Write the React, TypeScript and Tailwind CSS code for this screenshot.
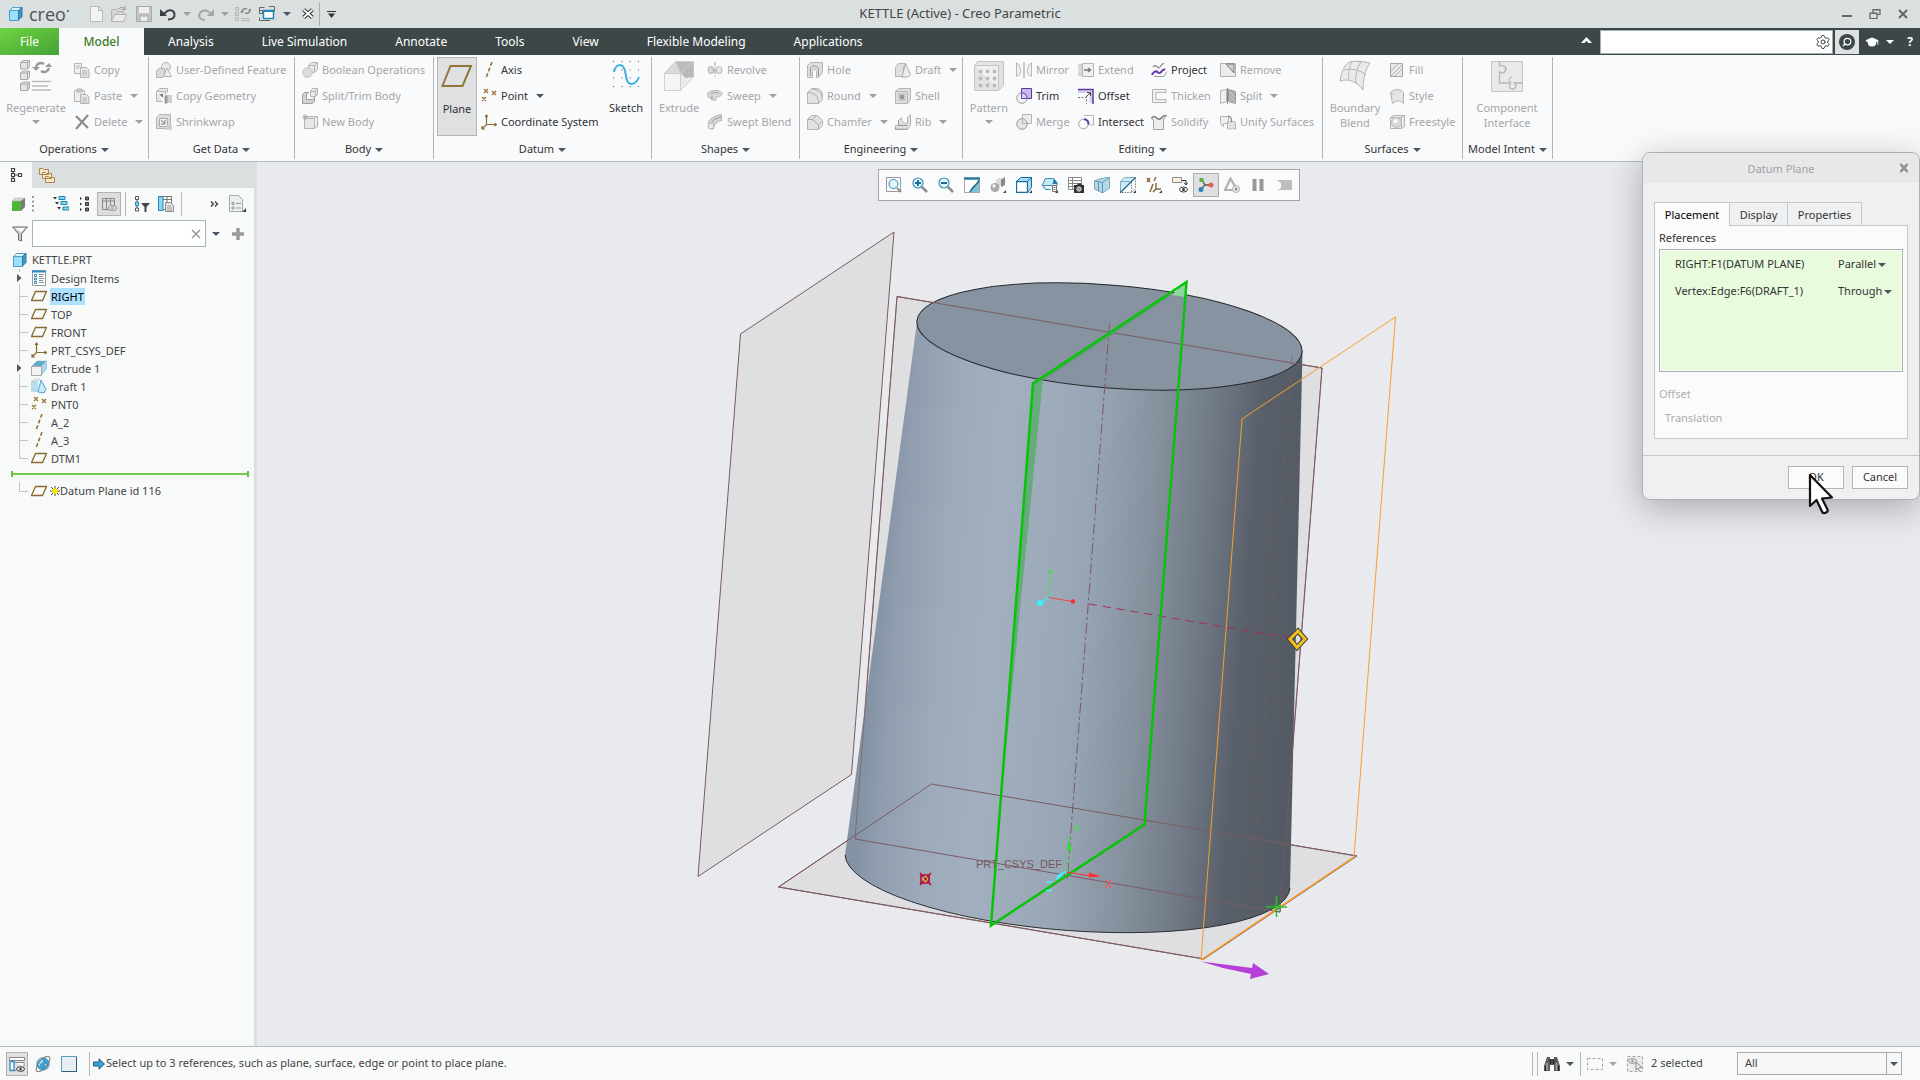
import type { ReactNode } from "react";
import { GraduationCap, Search, Settings } from "lucide-react";

type IconProps = { className?: string; box?: number; children: ReactNode };

const Icon = ({ className = "w-4 h-4", box = 16, children }: IconProps) => (
  <svg viewBox={`0 0 ${box} ${box}`} className={`${className} shrink-0`} fill="none" stroke="#b4b4b4">
    {children}
  </svg>
);

const Caret = ({ className = "text-gray-600" }: { className?: string }) => (
  <svg viewBox="0 0 8 4" className={`h-1 w-2 shrink-0 ${className}`}>
    <path d="M0 0h8L4 4z" fill="currentColor" />
  </svg>
);

/* ---------- shared model icons ---------- */

const BlueCube = () => (
  <Icon>
    <path d="M1.5 4.5h9v10h-9z" fill="#9be0fb" stroke="#4f9cc4" />
    <path d="M1.5 4.5l3-3H14l-3.5 3z" fill="#d6f3fd" stroke="#4f9cc4" />
    <path d="M10.5 4.5L14 1v9.5L10.5 14z" fill="#3f97c4" stroke="#2c7ba6" />
  </Icon>
);
const GreenCube = () => (
  <Icon>
    <path d="M1 5h9v10H1z" fill="#4cb734" stroke="none" />
    <path d="M1 5l3-3h10l-4 3z" fill="#d8d8d8" stroke="#a8a8a8" strokeWidth=".5" />
    <path d="M10 5l4-3v9l-4 4z" fill="#7b7b7b" stroke="none" />
  </Icon>
);
const PlaneIcon = () => (
  <Icon><path d="M4.5 3.5h11l-4 9h-11z" stroke="#8a6b33" strokeWidth="1.3" /></Icon>
);
const AxisIcon = () => (
  <Icon><path d="M11 0L5 16" stroke="#9a7634" strokeWidth="1.6" strokeDasharray="4 2" /></Icon>
);
const PointIcon = () => (
  <Icon><path d="M3 1l4 4m0-4L3 5M11 3l4 4m0-4l-4 4M1 9l4 4m0-4l-4 4" stroke="#9a7634" strokeWidth="1.4" /></Icon>
);
const CsysIcon = () => (
  <Icon>
    <path d="M5.500 1v9.500H15M5.500 10.500L1 15M4 3l1.500-2L7 3M13.500 9l2 1.500-2 1.500M1 12v3h3" stroke="#8a6b33" strokeWidth="1.200" />
  </Icon>
);
const ExtrudeIcon = () => (
  <Icon>
    <path d="M1 6l5-5h9.500l-5 5z" fill="#5ea9cc" stroke="#7fb7d2" strokeWidth=".5" />
    <path d="M10.500 6l5-5v8l-5 6z" fill="#a9d8ee" stroke="#7fb7d2" strokeWidth=".5" />
    <path d="M.5 6.500h10v9H.5z" fill="#f2f2f2" stroke="#a9a9a9" />
  </Icon>
);
const DraftTreeIcon = () => (
  <Icon>
    <path d="M0 3h7v11H0z" fill="#b9dced" stroke="none" />
    <path d="M1 3l3-2h5l-2 2z" fill="#ececec" stroke="#bbb" strokeWidth=".5" />
    <path d="M7 14L10 2l5 9-2 4z" fill="#c7e9f8" stroke="#4ea5cf" />
  </Icon>
);
const DesignItemsIcon = () => (
  <Icon>
    <path d="M1.500.5h13v15h-13z" fill="#fff" stroke="#9a9a9a" />
    <path d="M1 1.500h14" stroke="#2c8fbf" strokeWidth="2" />
    <path d="M3.500 4.500h2v2h-2zM3.500 8h2v2h-2zM3.500 11.500h2v2h-2z" stroke="#2c8fbf" />
    <path d="M8 4.500h5M8 6.500h4M8 8.500h5M8 10.500h4M8 12.500h5" stroke="#8a8a8a" />
  </Icon>
);

/* ---------- ribbon icons, small ---------- */

const small: Record<string, ReactNode> = {
  Copy: <><path d="M.5 1.500h7v10h-7z" fill="#f1f1f1" /><path d="M6.500 5.500h6l2.500 2.500v7.500h-8.500z" fill="#e6e6e6" /><path d="M2 4h4M2 6h3M8 9h5M8 11h5M8 13h5" /></>,
  Paste: <><path d="M.5 2.500h10v11H.5z" fill="#eee" /><path d="M3 1h5v3H3z" fill="#ccc" /><path d="M6.500 6.500h6l2.500 2.500v6.500h-8.500z" fill="#e6e6e6" /><path d="M8 10h5M8 12h5M8 14h5" /></>,
  Delete: <path d="M2 2l12 12M14 1L2 15" stroke="#8c8c8c" strokeWidth="2.200" />,
  "User-Defined Feature": <><circle cx="10" cy="5" r="4.500" fill="#e8e8e8" /><path d="M.5 8.500l2-2h6v7l-2 2h-6z" fill="#d9d9d9" /><path d="M11 6l4.500 8.500h-8z" fill="#ededed" /></>,
  "Copy Geometry": <><path d="M.5 3.500l3-3h8v4M.5 3.500h9v3M.5 3.500v10h6" fill="#e4e4e4" /><path d="M3 6h4v4z" fill="#777" stroke="none" /><path d="M9 7h7v8H9z" fill="#d0d0d0" stroke="none" /><path d="M8.500 7.500h3v8h-3z" fill="#9a9a9a" stroke="none" /></>,
  Shrinkwrap: <><path d="M.5 3.500l3-3h11v10l-3 4H.5z" fill="#dcdcdc" /><path d="M3.500 4.500h8v8h-8z" fill="#f2f2f2" stroke="#aaa" /><path d="M5 6l3 3M9 6v4H5" stroke="#777" /><path d="M10 11h6v5h-6z" fill="#d0d0d0" stroke="none" /></>,
  "Boolean Operations": <><path d="M6.500 3.500l3-3h6v7l-3 3h-6z" fill="#e9e9e9" /><path d="M6.500 3.500h6v7M12.500 3.500l3-3" /><circle cx="5.500" cy="10.500" r="4.800" fill="#dcdcdc" stroke="#c4c4c4" /></>,
  "Split/Trim Body": <><path d="M8.500 3.500l2-3h5v6l-2 2h-5z" fill="#ececec" /><path d="M8.500 3.500h5v5M13.500 3.500l2-3" /><path d="M.5 6.500l2-2h4l-2 2v5h6l2-2v4l-2.500 2H.5z" fill="#d2d2d2" stroke="#9c9c9c" /></>,
  "New Body": <><path d="M2.500 4.500h10v10h-10zM2.500 4.500l2-2h11l-3 2M12.500 14.500l3-2v-10" fill="#e8e8e8" /><path d="M3 0v6M0 3h6M1 1l4 4M5 1L1 5" stroke="#a5a5a5" strokeWidth=".8" /></>,
  Revolve: <><ellipse cx="4" cy="8" rx="3" ry="3.500" fill="#d8d8d8" /><ellipse cx="12" cy="8" rx="3" ry="3.500" fill="#e8e8e8" /><path d="M8 0v16" strokeDasharray="4 1.500 1 1.500" stroke="#999" /><path d="M5 8h5" /></>,
  Sweep: <><path d="M1 5c4-4 14-3 14 1 0 2-4 3-6 3v3c-2 1-4 0-4-1l-4-2z" fill="#dadada" /><path d="M4 6c3-2 7-2 8 0M5 8v4" stroke="#999" /></>,
  "Swept Blend": <><path d="M1.500 9.500C2 4 8 2 14.500.5v6C10 7 7 10 6.500 15l-5-1z" fill="#d6d6d6" /><circle cx="4" cy="12" r="3" fill="#ececec" /><path d="M5 8c2-3 5-4 9-5" stroke="#9a9a9a" /></>,
  Hole: <><path d="M.5 3.500l3-3h12v10l-4 5h-2v-6c0-3-4-3-4 0v6h-5z" fill="#dedede" /><path d="M3.500 14V7c0-4 7-4 8 0v7" stroke="#999" /></>,
  Round: <><path d="M.5 4.500l4-4h5c3 0 6 3 6 6v5l-4 4H.5z" fill="#e2e2e2" /><path d="M.5 4.500c7 0 11 3 11 11M5 1c6 0 10 4 10 8" stroke="#aaa" /></>,
  Chamfer: <><path d="M.5 5.500l4-4h6l5 5v5l-4 4H.5z" fill="#e2e2e2" /><path d="M.5 5.500h5l6 5.500v4.500M5.500 5.500l4-4M11.500 11l4-4" stroke="#aaa" /></>,
  Draft: <><path d="M.5 5.500l3-4h7l-2 4v9h-8z" fill="#e0e0e0" /><path d="M10.500 1.500l5 11-2.500 2.500h-6z" fill="#eee" stroke="#aaa" /></>,
  Shell: <><path d="M.5 3.500l3-3h12v11l-3 4H.5z" fill="#e0e0e0" /><path d="M.5 3.500h12v12" /><path d="M4 6h6v6H4z" fill="#999" stroke="#c9c9c9" strokeWidth="2" /></>,
  Rib: <><path d="M.5 15.500h12l3-4v-11l-3 3v6c-4 0-6-2-6-6l-3 3v5h-3z" fill="#e0e0e0" /><path d="M3.500 6.500v5h9" stroke="#999" /><path d="M0 15h12" strokeDasharray="1.500 1" stroke="#888" /></>,
  Mirror: <><path d="M1 1c4 4 5 10 1 13H.5V1zM15 1c-4 4-5 10-1 13h1.500V1z" fill="#f2f2f2" /><path d="M8 0v16" stroke="#999" /></>,
  Trim: <><path d="M5.500.5h10v10h-10z" fill="#c9b8f2" stroke="#5a3b9c" /><circle cx="6" cy="10" r="5.300" fill="#f3f3f3" stroke="#9c9c9c" /><path d="M5.500 4.700v5.800h5.500c0-3-2-5.500-5.500-5.800z" fill="#ddd2f5" stroke="#6a4aa8" /></>,
  Merge: <><path d="M6.500.5h9v9h-9z" fill="#ededed" /><circle cx="6" cy="10" r="5.300" fill="#e4e4e4" stroke="#9c9c9c" /><path d="M6.500 5v4.500H11" stroke="#b5b5b5" /></>,
  Extend: <><path d="M0 2.500h4v11H0" fill="#ddd" stroke="#ccc" /><path d="M4.500 1.500h11v13h-11z" fill="#f0f0f0" /><path d="M6 8h6M10 6l2.500 2-2.500 2" stroke="#777" strokeWidth="1.400" /></>,
  Offset: <><path d="M0 3.500h13V15" stroke="#d9cdf3" strokeWidth="3" /><path d="M0 1.500h15V16" stroke="#5a3b9c" strokeWidth="1.500" /><path d="M0 9.500h8.500V16" stroke="#777" strokeDasharray="2 1.500" /><path d="M8 9l4-4M9 4.500h3.500V8" stroke="#444" /></>,
  Intersect: <><path d="M6 1.500h9.500v9.500H12" stroke="#b5b5b5" /><circle cx="5.500" cy="10" r="4.800" stroke="#a5a5a5" /><path d="M6 5.200c3 0 5 2.500 4.500 5.500" stroke="#5a3b9c" strokeWidth="2" /></>,
  Project: <><path d="M2 5c3-4 5 3 7 0s3-4 4-3" stroke="#8c8c8c" strokeWidth="1.300" /><path d="M3 14.500h10l3-5" stroke="#9a9a9a" /><path d="M.5 12.500c2-1 3-4 5-3s3 3 5 0 3-1 3-3" stroke="#6432a8" strokeWidth="2" /></>,
  Thicken: <path d="M15 1.500H1.500v13H15v-3H5v-7h10z" fill="#f0f0f0" />,
  Solidify: <><path d="M.5 4.500C4-1 6 7 9 5s3-4 6.500-3.500L12.500 5v10.500h-10V6z" fill="#ededed" stroke="#a0a0a0" /><path d="M.5 4.500C4-1 6 7 9 5s3-4 6.500-3.500" stroke="#888" strokeWidth="1.600" /></>,
  Remove: <><path d="M.5 1.500h15v13H.5z" fill="#ececec" /><path d="M6 2l8 9V2z" fill="#d0d0d0" stroke="#777" /></>,
  Split: <><path d="M.5 2.500l6-1v12l-6 2z" fill="#f0f0f0" /><path d="M8.500 1.500l7 2v12l-7-2z" fill="#bdbdbd" stroke="#999" /><path d="M8.500 5l7 7M8.500 9l5 5M11 3l4 4" stroke="#999" /><path d="M7.500 0v16" stroke="#888" /></>,
  "Unify Surfaces": <><path d="M.5 2.500h8v7h-5v3c-2 0-3-3-3-5z" fill="#f0f0f0" /><path d="M7.500 7.500c2 2 4-2 8 1v7c-3-3-5 1-8-1z" fill="#e3e3e3" /><path d="M8 2c4 1 4 4 3 6" stroke="#888" strokeWidth="1.300" /></>,
  Fill: <><path d="M1.500 1.500h12v13h-12z" fill="#e8e8e8" stroke="#a5a5a5" /><path d="M2 9l7-7M2 14L13 3M6 14l7-7" /></>,
  Style: <><path d="M1.500 4.500c4-4 10-4 13 0v11c-4-4-7-3-11 0z" fill="#e4e4e4" /><path d="M1.500 4.500l3 2" /></>,
  Freestyle: <><path d="M1.500 3.500h11v11h-11zM1.500 3.500l3-2h11v11l-3 2M12.500 3.500l3-2" fill="#eee" /><circle cx="7.500" cy="8.500" r="5" fill="#d9d9d9" stroke="#bbb" /><circle cx="6.500" cy="7" r="2" fill="#fff" stroke="none" /></>,
};

const smallIcon = (name: string) => {
  if (name === "Axis") return <AxisIcon />;
  if (name === "Point") return <PointIcon />;
  if (name === "Coordinate System") return <CsysIcon />;
  return <Icon>{small[name]}</Icon>;
};

/* ---------- ribbon icons, large ---------- */

const miniCube = (x: number, y: number) => (
  <path
    key={y}
    d={`M${x} ${y + 2}l2-2h7v6l-2 2.500h-7zM${x} ${y + 2}h7v6.500M${x + 7} ${y + 2}l2-2`}
    fill="#e4e4e4"
    stroke="#a8a8a8"
  />
);

const large: Record<string, ReactNode> = {
  Regenerate: <>
    {[0.5, 11, 22].map((y) => miniCube(0.5, y))}
    <path d="M16 7c1-4 5-5 8-3M29 8c-1 4-5 5-8 3" stroke="#9a9a9a" strokeWidth="2.500" />
    <path d="M12 7h8l-4 4zM25 7h7l-3-4z" fill="#9a9a9a" stroke="none" />
    <path d="M12 21.500h19M12 26h16M12 30h19" stroke="#bdbdbd" strokeWidth="1.500" />
  </>,
  Plane: <path d="M9.500 5h20.500l-8.500 20H1.500z" stroke="#94753a" strokeWidth="2" />,
  Sketch: <>
    {[1.5, 10, 18, 26.5].map((y) => <path key={y} d={`M3 ${y}h26`} stroke="#555" strokeDasharray="1 7.300" />)}
    <path d="M4 12C6 3 13 3 15 11c1.500 6 1 12 6 13 4 0 6-2 8-7" stroke="#3fb0e0" strokeWidth="2" />
  </>,
  Extrude: <>
    <path d="M1.500 13.500l11-12h18l-13 12z" fill="#bcbcbc" stroke="#cfcfcf" />
    <path d="M12.500 1.500l5 12h-16z" fill="#dadada" stroke="#cfcfcf" />
    <path d="M17.500 13.500l13-12V17l-13 13.500z" fill="#ececec" stroke="#cfcfcf" />
    <path d="M30.500 1.500V17l-8 1-4.500-4.500z" fill="#b9b9b9" stroke="none" />
    <path d="M1.500 13.500h16v17h-16z" fill="#f4f4f4" stroke="#cfcfcf" />
  </>,
  Pattern: <>
    <path d="M1.500 5.500l3-4h26v24l-5 5h-24z" fill="#e2e2e2" stroke="#c4c4c4" />
    <path d="M1.500 5.500h24v25" fill="#f0f0f0" stroke="#c4c4c4" />
    {[10, 17, 24].flatMap((y) => [6, 13, 20].map((x) => <path key={`${x}-${y}`} d={`M${x} ${y}h3v3h-3z`} fill="#a5a5a5" stroke="#d0d0d0" />))}
  </>,
  "Boundary Blend": <>
    <path d="M1 21C3 9 7 2 13 1.500c6-.5 12 0 18 1.500-4 5-7 14-7 27C18 22 10 18 1 21z" fill="#eaeaea" stroke="#b4b4b4" />
    <path d="M13 1.500C10 7 9 14 10 19.500M22 1.500C18 8 16 16 17 23M5 10c7-2 17 0 22 5" stroke="#b4b4b4" />
  </>,
  "Component Interface": <>
    <path d="M.5 1.500h31v30H.5z" fill="#e9e9e9" stroke="#c4c4c4" />
    <path d="M8.500 2v4c3-1 7 0 6 4s-5 3-6 2v11h11c-2 3-1 6 2 6s5-3 2-6h8" stroke="#b4b4b4" strokeWidth="1.300" />
    <path d="M14 9h2M20 16v2c-3 0-3 4 0 4" stroke="#b4b4b4" />
  </>,
};

/* ---------- ribbon ---------- */

const enabled = ["Plane", "Axis", "Point", "Coordinate System", "Sketch", "Project", "Trim", "Offset", "Intersect"];
const withMenu = ["Regenerate", "Paste", "Delete", "Point", "Sweep", "Round", "Chamfer", "Draft", "Rib", "Pattern", "Split"];
const tone = (name: string) => (enabled.includes(name) ? "text-[#333]" : "text-[#a6a6a6]");
const caretTone = (name: string) => (enabled.includes(name) ? "text-gray-600" : "text-[#a0a0a0]");

type Part = { big: string; className: string } | { items: string[]; className: string };
type Group = { title: string; className: string; parts: Part[] };

const groups: Group[] = [
  { title: "Operations", className: "w-[149px]", parts: [
    { big: "Regenerate", className: "w-[72px]" },
    { items: ["Copy", "Paste", "Delete"], className: "pl-0.5" },
  ] },
  { title: "Get Data", className: "w-[146px]", parts: [
    { items: ["User-Defined Feature", "Copy Geometry", "Shrinkwrap"], className: "pl-[7px]" },
  ] },
  { title: "Body", className: "w-[139px]", parts: [
    { items: ["Boolean Operations", "Split/Trim Body", "New Body"], className: "pl-[7px]" },
  ] },
  { title: "Datum", className: "w-[218px]", parts: [
    { big: "Plane", className: "ml-[3px] w-10 border border-[#b4b4b4] bg-[#dfe0e2]" },
    { items: ["Axis", "Point", "Coordinate System"], className: "w-[126px] pl-1" },
    { big: "Sketch", className: "w-[46px]" },
  ] },
  { title: "Shapes", className: "w-[148px]", parts: [
    { big: "Extrude", className: "w-[54px]" },
    { items: ["Revolve", "Sweep", "Swept Blend"], className: "pl-px" },
  ] },
  { title: "Engineering", className: "w-[163px]", parts: [
    { items: ["Hole", "Round", "Chamfer"], className: "w-[95px] pl-[7px]" },
    { items: ["Draft", "Shell", "Rib"], className: "" },
  ] },
  { title: "Editing", className: "w-[360px]", parts: [
    { big: "Pattern", className: "w-[52px]" },
    { items: ["Mirror", "Trim", "Merge"], className: "w-[63px] pl-px" },
    { items: ["Extend", "Offset", "Intersect"], className: "w-[73px]" },
    { items: ["Project", "Thicken", "Solidify"], className: "w-[69px]" },
    { items: ["Remove", "Split", "Unify Surfaces"], className: "" },
  ] },
  { title: "Surfaces", className: "w-[140px]", parts: [
    { big: "Boundary Blend", className: "w-16" },
    { items: ["Fill", "Style", "Freestyle"], className: "pl-0.5" },
  ] },
  { title: "Model Intent", className: "w-[90px]", parts: [
    { big: "Component Interface", className: "w-[88px]" },
  ] },
];

const BigButton = ({ name, className }: { name: string; className: string }) => (
  <button className={`flex h-[79px] shrink-0 flex-col items-center pt-[3px] ${className} ${tone(name)}`}>
    <Icon className="h-8 w-8" box={32}>{large[name]}</Icon>
    <span className="mt-2 flex flex-col items-center leading-[15px]">
      {name.split(" ").map((word) => <span key={word}>{word}</span>)}
    </span>
    {withMenu.includes(name) && <span className="flex h-3.5 items-center"><Caret className={caretTone(name)} /></span>}
  </button>
);

const SmallButton = ({ name }: { name: string }) => (
  <button className={`flex h-[26px] items-center gap-1 ${tone(name)}`}>
    {smallIcon(name)}
    <span>{name}</span>
    {withMenu.includes(name) && <span className="pl-1"><Caret className={caretTone(name)} /></span>}
  </button>
);

const Ribbon = () => (
  <div className="flex border-b border-[#aebcbf] bg-[#f9fafc] py-0.5 whitespace-nowrap">
    {groups.map((g) => (
      <section key={g.title} className={`flex shrink-0 flex-col border-r border-[#b0b4b6] ${g.className}`}>
        <div className="flex h-[79px]">
          {g.parts.map((p) =>
            "big" in p ? (
              <BigButton key={p.big} name={p.big} className={p.className} />
            ) : (
              <div key={p.items[0]} className={`flex shrink-0 flex-col ${p.className}`}>
                {p.items.map((n) => <SmallButton key={n} name={n} />)}
              </div>
            )
          )}
        </div>
        <button className="flex h-[23px] items-center justify-center gap-1 pt-1 text-[#333]">
          {g.title} <Caret />
        </button>
      </section>
    ))}
  </div>
);

/* ---------- title bar and tabs ---------- */

const TitleBar = () => (
  <header className="grid h-7 grid-cols-[1fr_auto_1fr] items-center bg-[#dadfdf]">
    <div className="flex items-center pl-2">
      <BlueCube />
      <span className="ml-[5px] flex w-[55px] font-['Open_Sans',sans-serif] text-[18px] leading-6 font-medium text-[#4c5557]">
        creo<span className="mt-2 ml-px h-0.5 w-0.5 rounded-full bg-[#4c5557]" />
      </span>
      <button aria-label="New" className="ml-1"><Icon><path d="M2.500.5h8l4 4v11h-12z" fill="#f3f3f3" stroke="#bbb" /><path d="M10.500.5v4h4" /></Icon></button>
      <button aria-label="Open" className="ml-[7px]"><Icon><path d="M.5 15V3.500h5l1 2h6V9" fill="#d5d5d5" /><path d="M.5 15.500l3-7h12l-3 7z" fill="#ececec" /><path d="M7 3c3-2 5-2 7 0M14 0v3.500h-3.500" stroke="#999" /></Icon></button>
      <button aria-label="Save" className="ml-[9px]"><Icon><path d="M.5.5h15v15H.5z" fill="#c4c4c4" stroke="#a9a9a9" /><path d="M3 1h10v6H3z" fill="#f0f0f0" stroke="none" /><path d="M4 10h8v5.500H4z" fill="#eee" stroke="#aaa" /></Icon></button>
      <button aria-label="Undo" className="ml-2"><Icon><path d="M2 6c3 3 2 2 4 0 3-3 8-2 8.500 2S12 13.500 8 13.500" stroke="#3b3f41" strokeWidth="2" /><path d="M0 3v7h7z" fill="#3b3f41" stroke="none" /></Icon></button>
      <span className="ml-[7px]"><Caret className="text-[#a0a0a0]" /></span>
      <button aria-label="Redo" className="ml-[7px]"><Icon><path d="M12 7c-3-4-9-3-10.500 1S4 14 7 14" stroke="#a5a5a5" strokeWidth="2" /><path d="M16 3v7H9z" fill="#a5a5a5" stroke="none" /></Icon></button>
      <span className="ml-[7px]"><Caret className="text-[#a0a0a0]" /></span>
      <button aria-label="Regenerate" className="ml-1.5"><Icon><path d="M.5 1.500h3v3h-3zM.5 6.500h3v3h-3zM.5 11.500h3v3h-3z" /><path d="M6 12.500h9M6 14.500h9" /><path d="M7 6c0-3 3-4 5-3M15 4c0 3-3 4-5 3" stroke="#888" strokeWidth="1.500" /><path d="M5 5h4L7 7.500zM13 5h4l-2-2.500z" fill="#888" stroke="none" /></Icon></button>
      <button aria-label="Windows" className="ml-2"><Icon><path d="M.5 4.500v-3h5M.5 11.500v3h5M10 .5h5.500v5M.5 4.500h3v3h-3zM11 14.500h-6" stroke="#666" /><path d="M4.500 4.500h10v8h-10z" fill="#fff" stroke="#2186b4" strokeWidth="1.500" /><path d="M4 5h11" stroke="#2186b4" strokeWidth="2" /></Icon></button>
      <span className="ml-2"><Caret /></span>
      <button aria-label="Close window" className="ml-[10px]"><Icon className="h-3.5 w-3.5"><path d="M3 3l10 9M13 3L3 12" stroke="#333" strokeWidth="4.500" /><path d="M3 3l10 9M13 3L3 12" stroke="#fff" strokeWidth="2" /></Icon></button>
      <span className="ml-1 h-6 border-l border-[#a9b0b0]" />
      <button aria-label="Customize" className="ml-[7px]"><svg viewBox="0 0 9 7" className="h-[7px] w-[9px]"><path d="M0 0h9v1H0zM1 2.500h7L4.500 7z" fill="#333" /></svg></button>
    </div>
    <h1 className="text-[13px] text-[#444]">KETTLE (Active) - Creo Parametric</h1>
    <div className="flex items-center justify-end gap-4 pr-[11px]">
      <button aria-label="Minimize"><Icon className="h-3 w-3" box={12}><path d="M1 8h10" stroke="#666" strokeWidth="2" /></Icon></button>
      <button aria-label="Restore"><Icon className="h-3 w-3" box={12}><path d="M1 5h7v5.500H1zM4 5V1.500h7v5H8M4 2h7M1 5.500h7" stroke="#666" strokeWidth="1.200" /></Icon></button>
      <button aria-label="Close"><Icon className="h-3 w-3" box={12}><path d="M2 2l8 8M10 2l-8 8" stroke="#666" strokeWidth="2" /></Icon></button>
    </div>
  </header>
);

const tabs = ["Analysis", "Live Simulation", "Annotate", "Tools", "View", "Flexible Modeling", "Applications"];

const TabBar = () => (
  <nav className="flex h-[27px] items-center bg-[#3d4748] text-[12px] text-white">
    <button className="h-full w-[59px] bg-linear-to-br from-[#6ed53f] to-[#46a138] pt-px">File</button>
    <button className="h-full w-[85px] bg-[#f9fafc] pt-px font-medium text-[#3a7a26]">Model</button>
    {tabs.map((t) => <button key={t} className="h-full px-6 pt-px">{t}</button>)}
    <div className="ml-auto flex h-full items-center pr-1.5">
      <button aria-label="Minimize the ribbon" className="mr-2 pb-1"><svg viewBox="0 0 11 6" className="h-1.5 w-[11px]"><path d="M0 6L5.500 0 11 6H7.500l-2-2-2 2z" fill="#fff" /></svg></button>
      <div className="flex h-6 w-[233px] items-center border border-[#9fb0b3] bg-white">
        <input aria-label="Search commands" className="h-full min-w-0 flex-1 px-2 text-[#333] outline-none" />
        <Settings className="mr-px h-4 w-4 text-[#444]" strokeWidth={1.5} />
      </div>
      <button aria-label="Search" className="ml-0.5 flex h-6 w-6 items-center justify-center bg-[#dfe0e3]">
        <span className="flex h-4 w-4 items-center justify-center rounded-full bg-[#3d4748]"><Search className="h-2.5 w-2.5 -scale-x-100" strokeWidth={3} /></span>
      </button>
      <button aria-label="Learning" className="ml-1.5"><GraduationCap className="h-3.5 w-3.5" fill="white" strokeWidth={1.5} /></button>
      <span className="ml-[7px]"><Caret className="text-white" /></span>
      <button aria-label="Help" className="ml-3 w-2 font-bold">?</button>
    </div>
  </nav>
);

/* ---------- model tree ---------- */

type Row = { label: string; icon: ReactNode; expandable?: boolean; selected?: boolean };

const rows: Row[] = [
  { label: "Design Items", icon: <DesignItemsIcon />, expandable: true },
  { label: "RIGHT", icon: <PlaneIcon />, selected: true },
  { label: "TOP", icon: <PlaneIcon /> },
  { label: "FRONT", icon: <PlaneIcon /> },
  { label: "PRT_CSYS_DEF", icon: <CsysIcon /> },
  { label: "Extrude 1", icon: <ExtrudeIcon />, expandable: true },
  { label: "Draft 1", icon: <DraftTreeIcon /> },
  { label: "PNT0", icon: <PointIcon /> },
  { label: "A_2", icon: <AxisIcon /> },
  { label: "A_3", icon: <AxisIcon /> },
  { label: "DTM1", icon: <PlaneIcon /> },
];

const Branch = ({ expandable, last }: { expandable?: boolean; last?: boolean }) => (
  <svg viewBox="0 0 31 18" className="h-[18px] w-[31px] shrink-0" fill="none">
    {expandable ? (
      <>
        <path d="M19.500 0v3M19.500 15v3" stroke="#c2c4c4" />
        <path d="M17 5l4.500 4-4.500 4z" fill="#555" />
      </>
    ) : (
      <path d={last ? "M19.500 0v9.500H28" : "M19.500 0v18M19.500 9.500H28"} stroke="#c2c4c4" />
    )}
  </svg>
);

const Sep = () => <span className="h-6 border-l border-[#b4b8b8]" />;

const Sidebar = () => (
  <aside className="flex w-[257px] shrink-0 flex-col border-r-[3px] border-[#dadfdf] bg-[#f8faf9] text-[#444]">
    <div className="flex h-[26px] bg-[#dadfdf]">
      <button aria-label="Model Tree" className="flex w-8 items-center justify-center bg-[#f8faf9]">
        <Icon><path d="M3.500 1.500h3v3h-3zM3.500 6.500h3v3h-3zM3.500 11.500h3v3h-3zM10.500 6.500h3v3h-3z M5 4.500v2M5 9.500v2M6.500 8h4" stroke="#444" strokeWidth="1.200" /></Icon>
      </button>
      <button aria-label="Folder Browser" className="ml-[7px]">
        <Icon><path d="M.5 1.500h3l1 1h5v5h-9zM3.500 5.500h3l1 1h5v5h-9zM6.500 9.500h3l1 1h5v5h-9z" fill="#f7e7c4" stroke="#a8894d" /></Icon>
      </button>
    </div>
    <div className="flex h-8 items-center pl-[11px]">
      <GreenCube />
      <svg viewBox="0 0 2 16" className="ml-[5px] h-4 w-0.5"><path d="M1 0v16" stroke="#999" strokeWidth="2" strokeDasharray="2 2.500" /></svg>
      <button aria-label="Expand all" className="ml-[19px]"><Icon><path d="M0 1h4L2 3.500zM2 6h4L4 8.500zM4 11h4l-2 2.500z" fill="#333" stroke="none" /><path d="M6 .5h6v3H6zM8 5.500h6v3H8zM10 11h6v3h-6z" fill="#8fd4ef" stroke="#2186b4" /></Icon></button>
      <button aria-label="Collapse all" className="ml-2"><Icon><path d="M3 1l2 1.500L3 4zM3 6.500L5 8 3 9.500zM3 12l2 1.500L3 15z" fill="#333" stroke="none" /><path d="M8.500 1h3v3h-3zM8.500 6.500h3v3h-3zM8.500 12h3v3h-3z" fill="#777" stroke="#333" /></Icon></button>
      <button aria-label="Tree columns" className="ml-1 flex h-6 w-6 items-center justify-center border border-[#b4b4b4] bg-[#dcdddf]">
        <Icon><path d="M1.500 2.500h12v11h-12zM1.500 5h12M5.500 2.500v11M9.500 2.500v7" stroke="#8a8a8a" /><ellipse cx="11.500" cy="12" rx="4" ry="2.500" fill="#eee" stroke="#8a8a8a" /><circle cx="11.500" cy="12" r="1" stroke="#8a8a8a" /></Icon>
      </button>
      <span className="ml-1 flex"><Sep /></span>
      <button aria-label="Tree filters" className="ml-2"><Icon><path d="M1.500.5h3v3h-3zM1.500 12h3v3h-3zM3 3.500v8.500" stroke="#555" /><path d="M1.500 6h3v3.500h-3z" fill="#8fd4ef" stroke="#2186b4" /><path d="M7 7h9l-3.500 4v5h-2v-5z" fill="#444" stroke="none" /></Icon></button>
      <button aria-label="Tree settings" className="ml-2"><Icon><path d="M.5.5h13v13H.5zM.5 3.500h13M9 .5v8" fill="#fff" stroke="#777" /><path d="M.5.5h4.500v14H.5z" fill="#8fd4ef" stroke="#2186b4" /><path d="M7.500 6.500h5l3 3v6h-8z" fill="#e9e9e9" stroke="#888" /><path d="M9 10h4M9 12h5M9 14h5" stroke="#999" /></Icon></button>
      <span className="ml-[7px] flex"><Sep /></span>
      <button aria-label="More" className="ml-7"><svg viewBox="0 0 9 6" className="h-1.5 w-[9px]"><path d="M1 .5L3.500 3 1 5.500M5 .5L7.500 3 5 5.500" fill="none" stroke="#333" strokeWidth="1.200" /></svg></button>
      <button aria-label="Settings" className="ml-[10px]"><Icon className="h-[18px] w-[18px]" box={18}><path d="M.5.5h9l4 4v12H.5z" fill="#eceff1" stroke="#a5a9ab" /><path d="M3 7.500h2v2H3zM3 12h2v2H3zM7 8.500h5M7 13h5" stroke="#999" /><path d="M17 13v4h-4z" fill="#444" stroke="none" /></Icon></button>
    </div>
    <div className="flex h-[27px] items-center pl-3">
      <Icon><path d="M.5 1h15l-6 7v7l-3-1V8z" fill="#c9cbcc" stroke="#6c6f70" /><path d="M3 2h10L9 6z" fill="#fff" stroke="none" /></Icon>
      <div className="ml-1 flex h-full w-[174px] items-center border border-[#a9b6b8] bg-white">
        <input aria-label="Filter tree" className="h-full min-w-0 flex-1 px-1 outline-none" />
        <button aria-label="Clear filter" className="mr-1"><Icon className="h-2.5 w-2.5" box={10}><path d="M1 1l8 8M9 1L1 9" stroke="#999" strokeWidth="1.500" /></Icon></button>
      </div>
      <span className="ml-1.5"><Caret /></span>
      <button aria-label="Add" className="ml-3"><Icon className="h-3 w-3" box={12}><path d="M6 0v12M0 6h12" stroke="#999" strokeWidth="3.500" /></Icon></button>
    </div>
    <div className="mt-1 flex h-[18px] items-center gap-1 pl-3"><BlueCube />KETTLE.PRT</div>
    <ul>
      {rows.map((r, i) => (
        <li key={r.label} className="flex h-[18px] items-center">
          <Branch expandable={r.expandable} last={i === rows.length - 1} />
          {r.icon}
          <button className={`ml-[3px] px-px leading-[17px] ${r.selected ? "bg-[#aee0ff] text-black" : ""}`}>{r.label}</button>
        </li>
      ))}
    </ul>
    <div className="flex h-[14px] items-center pr-[5px] pl-[11px]">
      <span className="h-1.5 w-0.5 bg-[#5fc43c]" />
      <span className="h-0.5 flex-1 bg-[#72cc4e]" />
      <span className="h-1.5 w-0.5 bg-[#5fc43c]" />
    </div>
    <div className="mt-px flex h-[18px] items-center">
      <Branch last />
      <PlaneIcon />
      <span className="ml-[3px]"><Icon className="h-2.5 w-2.5" box={10}><path d="M5 0v10M0 5h10M1 1l8 8M9 1L1 9" stroke="#222" strokeWidth=".8" /><circle cx="5" cy="5" r="2.800" fill="#f4e800" stroke="none" /></Icon></span>
      Datum Plane id 116
    </div>
  </aside>
);

/* ---------- graphics toolbar ---------- */

const corner = <path d="M16 13v3h-3z" fill="#444" stroke="none" />;
const lens = <><circle cx="6" cy="6" r="5" fill="#e6f6fd" stroke="#3a8bb5" strokeWidth="1.200" /><path d="M10 10l5 5" stroke="#8c8c8c" strokeWidth="2.500" /></>;

const viewTools: { name: string; icon: ReactNode; pressed?: boolean }[] = [
  { name: "Refit", icon: <><path d="M.5.5h14v14H.5z" stroke="#999" /><circle cx="7.500" cy="7" r="4.500" fill="#e6f6fd" stroke="#3a8bb5" /><path d="M11 11l4 4" stroke="#8c8c8c" strokeWidth="2" /></> },
  { name: "Zoom In", icon: <>{lens}<path d="M3 6h6M6 3v6" stroke="#1a6d98" strokeWidth="2" /></> },
  { name: "Zoom Out", icon: <>{lens}<path d="M3 6h6" stroke="#1a6d98" strokeWidth="2" /></> },
  { name: "Repaint", icon: <><path d="M.5.5h15v15H.5z" fill="#7fc0dc" stroke="#a5a5a5" /><path d="M1 3h14c-2 6-7 6-9 12H1z" fill="#fff" stroke="none" /><path d="M15 3c-1 5-7 6-9 12" stroke="#1c6a94" strokeWidth="1.500" /><path d="M0 1.500h16" stroke="#2c7ba6" strokeWidth="2" /></> },
  { name: "Rendering Options", icon: <><path d="M8 1h6v6l-2 2H6V3z" fill="#dcdcdc" stroke="none" /><path d="M15 0v8l-4 2V3z" fill="#888" stroke="none" /><circle cx="5" cy="10.500" r="4.500" fill="#a9a9a9" stroke="none" /><circle cx="4" cy="9" r="1.800" fill="#eee" stroke="none" />{corner}</> },
  { name: "Display Style", icon: <><path d="M.5 4.500h11v11H.5z" fill="#fff" stroke="#1a6d98" strokeWidth="1.300" /><path d="M.5 4.500l4-4h11l-4 4zM11.500 4.500l4-4v10l-4 5z" fill="#a5dcf2" stroke="#1a6d98" />{corner}</> },
  { name: "Saved Orientations", icon: <><path d="M.5 7.500l3-6h8l3.500 4v3H.5zM.5 8.500l3 4h5" fill="#c3e8f6" stroke="#3a8bb5" /><path d="M12 1l3.500 6h-5z" fill="#2c7ba6" stroke="none" /><path d="M10.500 8.500h4v6h-4zM11.500 10.500h2M11.500 12.500h2" fill="#fff" stroke="#777" />{corner}</> },
  { name: "View Manager", icon: <><path d="M.5.5h13v12H.5zM.5 3.500h13M.5 6.500h13M.5 9.500h8M4.500.5v12" fill="#fff" stroke="#888" /><path d="M6 8h3l1-1.500h3L14 8h2v8H6z" fill="#333" stroke="none" /><circle cx="11" cy="12" r="2.200" fill="#999" stroke="#ddd" /></> },
  { name: "Perspective View", icon: <><path d="M.5 4l5-2 10-2v11l-7 5-8-4z" fill="#b5d8e7" stroke="#7aa9bf" /><path d="M.5 4l8 1.500 7-5M8.500 5.500V16M4.500 5v9" stroke="#5d96b1" /></> },
  { name: "Section", icon: <><path d="M.5 4.500l4-4h10L.5 15z" fill="#cdebf7" stroke="none" /><path d="M.5 15V4.500l4-4h11M.5 4.500H10" stroke="#7fa9bc" /><path d="M0 16L15.500.5" stroke="#1c6a94" strokeWidth="1.300" /><path d="M15.500 1v10l-4 4.500H1M11.500 5v10" stroke="#777" strokeDasharray="1.500 1.200" />{corner}</> },
  { name: "Datum Display Filters", icon: <><path d="M1 1l3 4M4 1L1 5M10 0L8 4M7 7l-3 8M10 6v6h5M10 12l-3 3" stroke="#8a6b33" strokeWidth="1.500" />{corner}</> },
  { name: "Annotation Display", icon: <><path d="M.5.5h9v5h-9z" fill="#fdf3d9" stroke="#888" /><path d="M10 3.500h4V7M12 5.500l2 2.500 2-2.500" stroke="#333" /><ellipse cx="11.500" cy="12.500" rx="4" ry="2.500" fill="#fff" stroke="#333" /><circle cx="11.500" cy="12.500" r="1.500" fill="#333" stroke="none" /></> },
  { name: "Spin Center", pressed: true, icon: <><path d="M4 3l3 5-4 4M7 8h6" stroke="#555" strokeWidth="1.300" /><circle cx="3.500" cy="3" r="2.300" fill="#5fae4c" stroke="none" /><circle cx="13" cy="8" r="2.500" fill="#e0605a" stroke="none" /><circle cx="3" cy="12.500" r="2.500" fill="#2f83b5" stroke="none" /></> },
  { name: "Analysis", icon: <><path d="M6.500 1.500L13 13H1z" stroke="#b0b0b0" strokeWidth="2.200" /><circle cx="12" cy="12" r="3.500" fill="#eee" stroke="#aaa" /><path d="M11 10l3 2-3 2z" fill="#888" stroke="none" /></> },
  { name: "Pause", icon: <path d="M4.500 2v12M11.500 2v12" stroke="#999" strokeWidth="4" /> },
  { name: "Resume", icon: <path d="M1 3h15v10H7c-2 0-4 0-6 1l4-3V6z" fill="#bdbdbd" stroke="none" /> },
];

const ViewToolbar = () => (
  <div className="relative mt-[7px] flex h-8 items-center border border-[#a5a5a5] bg-[#fafbfc] px-0.5">
    {viewTools.map((t) => (
      <button
        key={t.name}
        aria-label={t.name}
        aria-pressed={t.pressed}
        className={`flex h-6 w-[26px] items-center justify-center ${t.pressed ? "border border-[#adadad] bg-[#dfe0e2]" : ""}`}
      >
        <Icon>{t.icon}</Icon>
      </button>
    ))}
  </div>
);

/* ---------- model ---------- */

const edge = "#7d5a62";

const Model = () => (
  <svg viewBox="257 162 1663 884" preserveAspectRatio="xMidYMid slice" className="absolute inset-0 h-full w-full" fill="none">
    <defs>
      <linearGradient id="side" gradientUnits="userSpaceOnUse" x1="877" y1="584" x2="1295" y2="617">
        <stop offset="0" stopColor="#8493a3" />
        <stop offset=".05" stopColor="#8f9dae" />
        <stop offset=".16" stopColor="#9caaba" />
        <stop offset=".28" stopColor="#a2afbf" />
        <stop offset=".48" stopColor="#99a6b6" />
        <stop offset=".64" stopColor="#86919e" />
        <stop offset=".76" stopColor="#727c88" />
        <stop offset=".88" stopColor="#59606a" />
        <stop offset="1" stopColor="#555b65" />
      </linearGradient>
    </defs>

    {/* datum planes behind the solid */}
    <g fill="#dfdee0" stroke={edge}>
      <path d="M894 232L740.500 334 698 876.500 851.500 774.500z" />
      <path d="M897 296.500L1322 368l-42 544-425-73z" />
      <path d="M931.500 784L1357 856l-153 103-425.500-72z" />
    </g>

    {/* tapered body */}
    <path d="M917 322L845 855A223.200 60 4.560 0 0 1290 888L1302.500 351z" fill="url(#side)" />
    <path d="M845 855A223.200 60 4.560 0 0 1290 888" stroke="#2b2f33" />
    <ellipse cx="1109.500" cy="336.500" rx="193.200" ry="51.500" transform="rotate(4.620 1109.500 336.500)" fill="#8793a0" stroke="#24272a" />

    {/* plane outlines seen through the solid */}
    <g stroke={edge}>
      <path d="M897 296.500L1322 368M855 839l425 73" />
      <path d="M897 296.500L855 839M1322 368l-42 544" opacity=".7" />
      <path d="M931.500 784L1357 856M931.500 784L778.500 887l425.500 72" />
      <path d="M1109.500 324L1067 883" strokeDasharray="11 3 3 3" />
      <path d="M1292 354L1249 916" strokeDasharray="11 3 3 3" opacity=".5" />
    </g>
    <path d="M1089 604l207 35" stroke="#a82a55" strokeDasharray="8 6" />

    {/* reference plane */}
    <path d="M1395.500 317L1242 419 1201 960 1354 857z" stroke="#f79d2e" />
    <path d="M1201 960l153-103" stroke="#f79d2e" strokeWidth="1.500" />

    {/* new datum plane preview */}
    <path d="M1033 383l10-4-43 431z" fill="#66ab7a" />
    <path d="M1186 281l-14 14 13 2z" fill="#8ed6a0" />
    <path d="M1044 378L1169 295" stroke="#5d9a73" strokeWidth="3" />
    <path d="M1186.500 282L1033 383.500 991 925.500 1144.500 824.500z" stroke="#08c408" strokeWidth="2.500" />

    {/* spin center */}
    <path d="M1048.500 597.500l2-26" stroke="#4fe04f" />
    <path d="M1048.500 597.500l24 4" stroke="#f04444" />
    <path d="M1048.500 597.500l-8 6" stroke="#35f0f5" strokeWidth="1.500" />
    <circle cx="1050.500" cy="571.500" r="1.800" fill="#3fe03f" />
    <circle cx="1073" cy="601.500" r="2.200" fill="#f52f2f" />
    <circle cx="1040" cy="603" r="3" fill="#35f5fa" />

    {/* coordinate system */}
    <path d="M1067 872l3-36" stroke="#3ce83c" strokeDasharray="6 2" />
    <path d="M1066.500 850l2.500-10 2.500 10z" fill="#2ce02c" />
    <path d="M1067 872l23 4" stroke="#ff3030" />
    <path d="M1089 872.500l12 4-12 1z" fill="#ff3030" />
    <path d="M1067 871l-11 9 2-5z" fill="#3ef4f8" stroke="#3ef4f8" />
    <path d="M1046 882h6M1046 890.500h6" stroke="#3ef4f8" strokeWidth="1.500" />
    <g className="font-['Liberation_Sans',sans-serif] text-[11px]">
      <text x="976" y="868" fill="#765962">PRT_CSYS_DEF</text>
      <text x="1073" y="833" fill="#4be34b">Y</text>
      <text x="1105" y="888" fill="#f25050">X</text>
    </g>

    {/* point, handle and vertex marks */}
    <path d="M921 875h8v8h-8zM920 873l11 12M931 873l-11 12" stroke="#b3123a" strokeWidth="1.700" />
    <ellipse cx="925.500" cy="879" rx="2" ry="2.500" stroke="#f0c020" />
    <path d="M1298 631l7 8-8 8.500-7-8.500z" stroke="#3d3d3d" strokeWidth="5" />
    <path d="M1298 631l7 8-8 8.500-7-8.500z" stroke="#f2c019" strokeWidth="3" />
    <path d="M1276.500 896v21M1266 907h21" stroke="#22c522" strokeWidth="1.500" />
    <circle cx="1276.500" cy="906.500" r="3" stroke="#22a522" />

    {/* normal direction */}
    <path d="M1201 961.500l51 6.500 1-5 16 11-19 5 1-5-28-6z" fill="#b53fd8" />
  </svg>
);

/* ---------- datum plane dialog ---------- */

const Dialog = () => (
  <section
    aria-label="Datum Plane"
    className="absolute top-[152px] right-0 w-[278px] rounded-lg border border-[#b0b0b2] bg-[#eff0f2] text-[#333] shadow-[0_8px_36px_rgba(0,0,0,0.28)]"
  >
    <div className="grid h-[30px] grid-cols-[1fr_auto_1fr] items-center rounded-t-lg bg-[#e7e8ea]">
      <h2 className="col-start-2 pt-0.5 text-[#a3a3a3]">Datum Plane</h2>
      <button aria-label="Close dialog" className="justify-self-end pr-[10px]"><Icon className="h-2.5 w-2.5" box={10}><path d="M1.500 1l7 8M8.500 1l-7 8" stroke="#909090" strokeWidth="2.500" /></Icon></button>
    </div>
    <div className="px-[11px] pt-[19px]">
      <div role="tablist" className="-mb-px flex h-6">
        <button role="tab" aria-selected className="w-[76px] border border-b-0 border-[#c6c7c9] bg-[#fbfbfc] pt-0.5 text-black">Placement</button>
        <button role="tab" className="w-[58px] border border-l-0 border-[#c6c7c9] pt-0.5">Display</button>
        <button role="tab" className="w-[74px] border border-l-0 border-[#c6c7c9] pt-0.5">Properties</button>
      </div>
      <div className="flex flex-col border border-[#c6c7c9] bg-[#fbfbfc] px-1 pt-[3px] pb-[11px]">
        <h3 className="h-5 leading-[18px]">References</h3>
        <div className="h-[123px] border border-[#adadad] p-px">
          <div className="h-full bg-[#e9fbdd]">
            {[["RIGHT:F1(DATUM PLANE)", "Parallel"], ["Vertex:Edge:F6(DRAFT_1)", "Through"]].map(([ref, how]) => (
              <div key={ref} className="flex h-[27px] items-center pl-[14px]">
                <label htmlFor={how} className="w-[163px]">{ref}</label>
                <select id={how} className="field-sizing-content appearance-none">
                  <option>{how}</option>
                </select>
                <span className="ml-0.5"><Caret /></span>
              </div>
            ))}
          </div>
        </div>
        <h3 className="mt-[13px] leading-[18px] text-[#adadad]">Offset</h3>
        <p className="mt-1.5 pl-1.5 leading-[18px] text-[#adadad]">Translation</p>
      </div>
    </div>
    <div className="mt-4 flex justify-end gap-2 border-t border-[#c6c7c9] py-[10px] pr-[11px]">
      <button className="h-[23px] w-14 border border-[#b4b4b4] bg-[#fbfbfc]">OK</button>
      <button className="h-[23px] w-14 border border-[#b4b4b4] bg-[#fbfbfc]">Cancel</button>
    </div>
    <svg viewBox="0 0 28 42" className="absolute -bottom-4 left-[165px] h-[42px] w-7">
      <path d="M2 2v31l6.500-6 6 12.500c2 1.500 6-.5 5-3L14 25.500l10-1z" fill="#fff" stroke="#111" strokeWidth="2.200" strokeLinejoin="round" />
    </svg>
  </section>
);

/* ---------- status bar ---------- */

const StatusBar = () => (
  <footer className="flex h-[34px] items-center border-t border-[#aebcbf] bg-[#f8faf9] text-[#444]">
    <button aria-label="Show tree" className="ml-1.5 flex h-6 w-[22px] items-center justify-center border border-[#b0b0b0] bg-[#dfe0e2]">
      <Icon><path d="M.5 1.500h15v3H.5zM7 14.500h-6M6 6.500h9v4" fill="#fff" stroke="#888" /><path d="M1 5.500h4v9H1z" fill="#fff" stroke="#2c8fbf" strokeWidth="1.300" /><ellipse cx="11.500" cy="13" rx="4" ry="2.300" fill="#eee" stroke="#333" /><circle cx="11.500" cy="13" r="1.200" fill="#333" stroke="none" /></Icon>
    </button>
    <button aria-label="Show browser" className="ml-[7px]">
      <Icon><circle cx="8" cy="8" r="6.500" fill="#3a9fd2" stroke="#9ac7de" /><path d="M4 5c2-3 4-2 4 0s-3 2-3 4-3 0-1-4zM10 8c2 0 3 1 1 4z" fill="#bfe4f4" stroke="none" /><ellipse cx="8" cy="8" rx="9.500" ry="4" transform="rotate(-50 8 8)" stroke="#777" /></Icon>
    </button>
    <button aria-label="Full screen" className="ml-[10px]">
      <Icon><path d="M.5.5h15v15H.5z" fill="#e8edf2" stroke="#5c9fc0" /><path d="M15.500 1v14.500H1" stroke="#2c5d7a" /></Icon>
    </button>
    <span className="ml-3 flex"><Sep /></span>
    <svg viewBox="0 0 12 12" className="ml-[3px] h-3 w-3"><path d="M.5 4H6V.8L11.500 6 6 11.200V8H.5z" fill="#35a3cf" stroke="#22607e" /></svg>
    <p className="ml-px">Select up to 3 references, such as plane, surface, edge or point to place plane.</p>
    <div className="ml-auto flex items-center">
      <Sep /><span className="w-1" /><Sep />
      <button aria-label="Find" className="ml-1.5"><Icon><path d="M3 1h3v2h4V1h3l3 9v5h-6V9H6v6H0v-5z" fill="#5c5c5c" stroke="none" /><path d="M1.500 10v5M14.500 10v5M6.500 3v5M9.500 3v5" stroke="#222" strokeWidth="1.300" /><path d="M3 7v7M12.500 7v7" stroke="#aaa" strokeWidth="1.500" /></Icon></button>
      <span className="ml-1.5 mr-1.5"><Caret /></span>
      <Sep />
      <button aria-label="Box select" className="ml-1.5"><Icon><path d="M.5 2.500h15v11H.5z" stroke="#a5a5a5" strokeDasharray="3 2" /></Icon></button>
      <span className="ml-1.5"><Caret className="text-[#a8a8a8]" /></span>
      <button aria-label="Selected items" className="ml-[10px]"><Icon><path d="M.5.5h15v15H.5z" fill="#ececec" stroke="#a5a5a5" strokeDasharray="3 2" /><ellipse cx="5.500" cy="5" rx="4" ry="2.500" stroke="#999" /><circle cx="5.500" cy="5" r="1.200" fill="#999" /><path d="M9 6v8l2-2 1.500 3M9 6l6 5.500h-3" stroke="#888" /></Icon></button>
      <label htmlFor="filter" className="ml-2 w-[86px]">2 selected</label>
      <div className="mr-[18px] flex h-[23px] w-[165px] items-center border border-[#a9a9a9] bg-[#f6f7f8]">
        <select id="filter" className="h-full flex-1 appearance-none pl-[7px]">
          <option>All</option>
        </select>
        <span className="pointer-events-none flex h-full w-[15px] items-center justify-center border-l border-[#a9a9a9]"><Caret /></span>
      </div>
    </div>
  </footer>
);

export default function App() {
  return (
    <div className="relative flex min-h-screen flex-col overflow-hidden bg-[#e9eaee] font-['Noto_Sans',sans-serif] text-[11px]">
      <TitleBar />
      <TabBar />
      <Ribbon />
      <main className="flex flex-1">
        <Sidebar />
        <div className="relative flex flex-1 items-start justify-center">
          <Model />
          <ViewToolbar />
        </div>
      </main>
      <StatusBar />
      <Dialog />
    </div>
  );
}
